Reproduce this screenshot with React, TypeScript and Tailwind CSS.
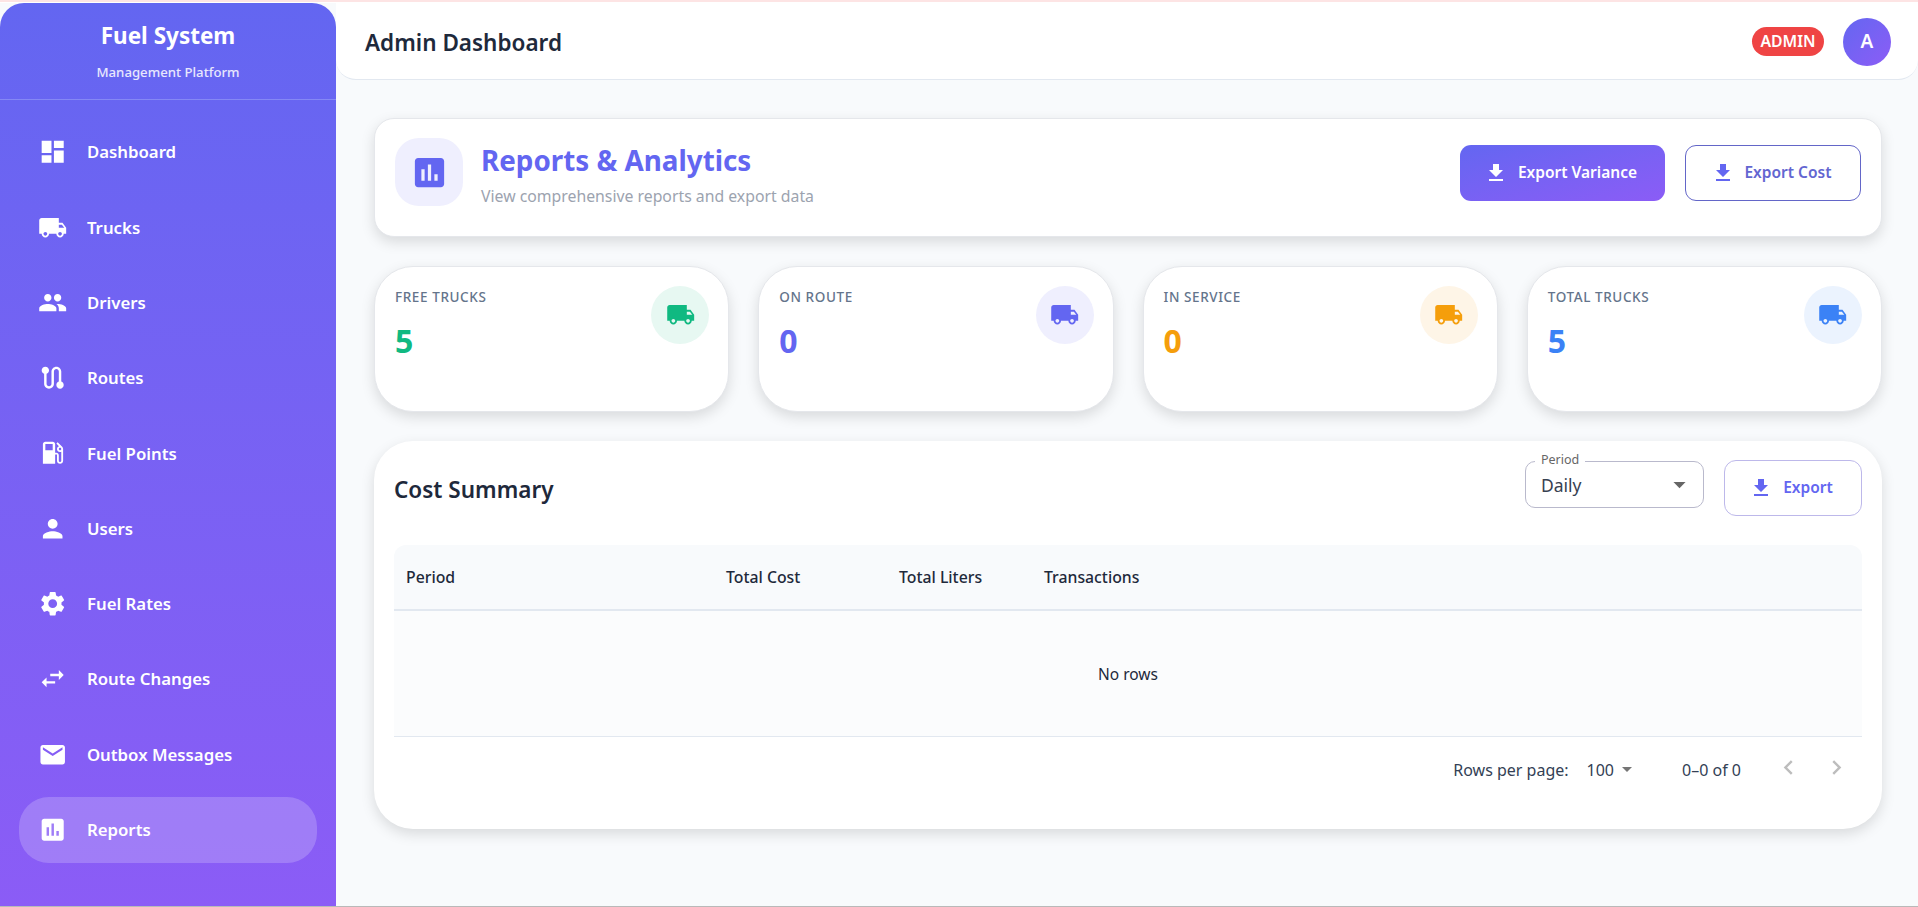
import React from "react";

const P = {
  dashboard: "M3 13h8V3H3v10zm0 8h8v-6H3v6zm10 0h8V11h-8v10zm0-18v6h8V3h-8z",
  truck: "M20 8h-3V4H3c-1.1 0-2 .9-2 2v11h2c0 1.66 1.34 3 3 3s3-1.34 3-3h6c0 1.66 1.34 3 3 3s3-1.34 3-3h2v-5l-3-4zM6 18.5c-.83 0-1.5-.67-1.5-1.5s.67-1.5 1.5-1.5 1.5.67 1.5 1.5-.67 1.5-1.5 1.5zm13.5-9 1.96 2.5H17V9.5h2.5zm-1.5 9c-.83 0-1.5-.67-1.5-1.5s.67-1.5 1.5-1.5 1.5.67 1.5 1.5-.67 1.5-1.5 1.5z",
  people: "M16 11c1.66 0 2.99-1.34 2.99-3S17.66 5 16 5c-1.66 0-3 1.34-3 3s1.34 3 3 3zm-8 0c1.66 0 2.99-1.34 2.99-3S9.66 5 8 5C6.34 5 5 6.34 5 8s1.34 3 3 3zm0 2c-2.33 0-7 1.17-7 3.5V19h14v-2.5c0-2.33-4.67-3.5-7-3.5zm8 0c-.29 0-.62.02-.97.05 1.16.84 1.97 1.97 1.97 3.45V19h6v-2.5c0-2.33-4.67-3.5-7-3.5z",
  route: "M19 15.18V7c0-2.21-1.79-4-4-4s-4 1.79-4 4v10c0 1.1-.9 2-2 2s-2-.9-2-2V8.82C8.16 8.4 9 7.3 9 6c0-1.66-1.34-3-3-3S3 4.34 3 6c0 1.3.84 2.4 2 2.82V17c0 2.21 1.79 4 4 4s4-1.79 4-4V7c0-1.1.9-2 2-2s2 .9 2 2v8.18c-1.16.41-2 1.51-2 2.82 0 1.66 1.34 3 3 3s3-1.34 3-3c0-1.3-.84-2.4-2-2.82z",
  gas: "m19.77 7.23.01-.01-3.72-3.72L15 4.56l2.11 2.11c-.94.36-1.61 1.26-1.61 2.33 0 1.38 1.12 2.5 2.5 2.5.36 0 .69-.08 1-.21v7.21c0 .55-.45 1-1 1s-1-.45-1-1V14c0-1.1-.9-2-2-2h-1V5c0-1.1-.9-2-2-2H6c-1.1 0-2 .9-2 2v16h10v-7.5h1.5v5c0 1.38 1.12 2.5 2.5 2.5s2.5-1.12 2.5-2.5V9c0-.69-.28-1.32-.73-1.77zM12 10H6V5h6v5zm6 0c-.55 0-1-.45-1-1s.45-1 1-1 1 .45 1 1-.45 1-1 1z",
  person: "M12 12c2.21 0 4-1.79 4-4s-1.79-4-4-4-4 1.79-4 4 1.79 4 4 4zm0 2c-2.67 0-8 1.34-8 4v2h16v-2c0-2.66-5.33-4-8-4z",
  settings: "M19.14 12.94c.04-.3.06-.61.06-.94 0-.32-.02-.64-.07-.94l2.03-1.58c.18-.14.23-.41.12-.61l-1.92-3.32c-.12-.22-.37-.29-.59-.22l-2.39.96c-.5-.38-1.03-.7-1.62-.94l-.36-2.54c-.04-.24-.24-.41-.48-.41h-3.84c-.24 0-.43.17-.47.41l-.36 2.54c-.59.24-1.13.57-1.62.94l-2.39-.96c-.22-.08-.47 0-.59.22L2.74 8.87c-.12.21-.08.47.12.61l2.03 1.58c-.05.3-.09.63-.09.94s.02.64.07.94l-2.03 1.58c-.18.14-.23.41-.12.61l1.92 3.32c.12.22.37.29.59.22l2.39-.96c.5.38 1.03.7 1.62.94l.36 2.54c.05.24.24.41.48.41h3.84c.24 0 .44-.17.47-.41l.36-2.54c.59-.24 1.13-.56 1.62-.94l2.39.96c.22.08.47 0 .59-.22l1.92-3.32c.12-.22.07-.47-.12-.61l-2.01-1.58zM12 15.6c-1.98 0-3.6-1.62-3.6-3.6s1.62-3.6 3.6-3.6 3.6 1.62 3.6 3.6-1.62 3.6-3.6 3.6z",
  swap: "M6.99 11 3 15l3.99 4v-3H14v-2H6.99v-3zM21 9l-3.99-4v3H10v2h7.01v3L21 9z",
  email: "M20 4H4c-1.1 0-1.99.9-1.99 2L2 18c0 1.1.9 2 2 2h16c1.1 0 2-.9 2-2V6c0-1.1-.9-2-2-2zm0 4-8 5-8-5V6l8 5 8-5v2z",
  report: "M19 3H5c-1.1 0-2 .9-2 2v14c0 1.1.9 2 2 2h14c1.1 0 2-.9 2-2V5c0-1.1-.9-2-2-2zM9 17H7v-7h2v7zm4 0h-2V7h2v10zm4 0h-2v-4h2v4z",
  download: "M5 20h14v-2H5v2zM19 9h-4V3H9v6H5l7 7 7-7z",
  drop: "M7 10l5 5 5-5z",
  left: "M15.41 16.59 10.83 12l4.58-4.59L14 6l-6 6 6 6 1.41-1.41z",
  right: "M8.59 16.59 13.17 12 8.59 7.41 10 6l6 6-6 6-1.41-1.41z",
};

function Icon({ d, className }: { d: string; className: string }) {
  return (
    <svg viewBox="0 0 24 24" fill="currentColor" className={className}>
      <path d={d} />
    </svg>
  );
}

const nav: [string, string][] = [
  ["Dashboard", P.dashboard],
  ["Trucks", P.truck],
  ["Drivers", P.people],
  ["Routes", P.route],
  ["Fuel Points", P.gas],
  ["Users", P.person],
  ["Fuel Rates", P.settings],
  ["Route Changes", P.swap],
  ["Outbox Messages", P.email],
  ["Reports", P.report],
];

const stats = [
  { label: "FREE TRUCKS", value: "5", text: "text-[#10b981]", bg: "bg-[#e7f8f2]" },
  { label: "ON ROUTE", value: "0", text: "text-[#6366f1]", bg: "bg-[#efeffe]" },
  { label: "IN SERVICE", value: "0", text: "text-[#f59e0b]", bg: "bg-[#fef5e7]" },
  { label: "TOTAL TRUCKS", value: "5", text: "text-[#3b82f6]", bg: "bg-[#ebf3fe]" },
];

export default function App() {
  return (
    <div className="flex h-[907px] w-[1918px] flex-col overflow-hidden bg-[#f8fafc] font-['Noto_Sans',sans-serif] text-[#1e293b]">
      <div className="h-[3px] shrink-0 border-t-2 border-[#fde4e4] bg-white" />
      <div className="flex min-h-0 flex-1">
        <aside className="flex w-[336px] shrink-0 flex-col rounded-t-[24px] bg-gradient-to-b from-[#6366f1] to-[#8b5cf6] text-white">
          <div className="flex h-[97px] shrink-0 flex-col items-center border-b border-[#8588f5] pt-[16px]">
            <div className="text-[22.5px] leading-[34px] font-bold">Fuel System</div>
            <div className="mt-[9px] text-[13.2px] leading-[20px] font-medium text-white/85">Management Platform</div>
          </div>
          <nav className="flex flex-col gap-[9.3px] px-[19px] pt-[19px]">
            {nav.map(([label, d]) => (
              <div
                key={label}
                className={`flex h-[66px] items-center rounded-[30px] pl-[18.5px] ${label === "Reports" ? "bg-white/20" : ""}`}
              >
                <Icon d={d} className="h-[29.4px] w-[29.4px] shrink-0" />
                <span className="ml-[20px] text-[16.8px] font-semibold">{label}</span>
              </div>
            ))}
          </nav>
        </aside>
        <main className="flex min-w-0 flex-1 flex-col">
          <header className="flex h-[77px] shrink-0 items-center justify-between rounded-b-[20px] border-b border-[#e2e8f0] bg-white pr-[27px] pl-[29px]">
            <h1 className="mt-[3px] text-[22.5px] font-semibold">Admin Dashboard</h1>
            <div className="mt-[1px] flex items-center gap-[19px]">
              <span className="flex h-[29px] w-[72px] items-center justify-center rounded-full bg-[#ef4444] text-[15.8px] font-semibold text-white">ADMIN</span>
              <div className="flex h-[48px] w-[48px] items-center justify-center rounded-full bg-gradient-to-br from-[#6366f1] to-[#8b5cf6] text-[19px] font-semibold text-white">A</div>
            </div>
          </header>
          <div className="flex flex-col pt-[38px] pr-[36px] pl-[38px]">
            <section className="flex h-[119px] items-start justify-between rounded-[20px] border border-[#e5e7eb] bg-white pt-[19px] pr-[20px] pl-[20px] shadow-[0_5px_14px_rgba(0,0,0,0.13)]">
              <div className="flex items-start">
                <div className="flex h-[68px] w-[68px] items-center justify-center rounded-[24px] bg-[#efeffe] text-[#6366f1]">
                  <Icon d={P.report} className="h-[39px] w-[39px]" />
                </div>
                <div className="ml-[18px]">
                  <h2 className="mt-[3px] text-[27.8px] leading-[38px] font-bold text-[#6366f1]">Reports &amp; Analytics</h2>
                  <p className="mt-[6px] text-[15.8px] leading-[22px] text-[#9ca3af]">View comprehensive reports and export data</p>
                </div>
              </div>
              <div className="mt-[7px] flex gap-[20px]">
                <button className="flex h-[56px] w-[205px] items-center justify-center gap-[10px] rounded-[11px] bg-gradient-to-br from-[#6366f1] to-[#8b5cf6] pr-[4px] text-[15.5px] font-semibold text-white">
                  <Icon d={P.download} className="h-[24px] w-[24px]" />
                  Export Variance
                </button>
                <button className="flex h-[56px] w-[176px] items-center justify-center gap-[9px] rounded-[11px] border border-[#6366c8] bg-white pr-[3px] text-[15.5px] font-semibold text-[#6366d1]">
                  <Icon d={P.download} className="h-[24px] w-[24px] text-[#6366f1]" />
                  Export Cost
                </button>
              </div>
            </section>

            <div className="mt-[29px] grid grid-cols-4 gap-[29px]">
              {stats.map((s) => (
                <div key={s.label} className="flex h-[146px] justify-between rounded-[39px] border border-[#e5e7eb] bg-white pt-[19px] pr-[19px] pl-[20px] shadow-[0_5px_14px_rgba(0,0,0,0.13)]">
                  <div>
                    <div className="mt-[1px] text-[13.5px] leading-[20px] font-medium tracking-[0.6px] text-[#64748b]">{s.label}</div>
                    <div className={`mt-[12px] text-[32px] leading-[44px] font-bold ${s.text}`}>{s.value}</div>
                  </div>
                  <div className={`flex h-[58px] w-[58px] items-center justify-center rounded-full ${s.bg} ${s.text}`}>
                    <Icon d={P.truck} className="h-[29.4px] w-[29.4px]" />
                  </div>
                </div>
              ))}
            </div>

            <section className="mt-[29px] flex h-[388px] flex-col rounded-[39px] bg-white px-[20px] pt-[19px] shadow-[0_5px_14px_rgba(0,0,0,0.13)]">
              <div className="flex h-[56px] shrink-0 items-center justify-between">
                <h3 className="mt-[4px] text-[22.5px] font-semibold">Cost Summary</h3>
                <div className="flex items-start gap-[20px]">
                  <div className="relative mt-[1px] flex h-[47px] w-[179px] items-center justify-between rounded-[10px] border border-[#b9b9cc] pr-[9px] pl-[15px] text-[#374151]">
                    <span className="absolute top-[-11px] left-[9px] bg-white px-[6px] text-[12.5px] leading-[18px] text-[#666]">Period</span>
                    <span className="mt-[1px] text-[17.5px]">Daily</span>
                    <Icon d={P.drop} className="h-[29px] w-[29px] text-[#666]" />
                  </div>
                  <button className="flex h-[56px] w-[138px] items-center justify-center gap-[10px] rounded-[12px] border border-[#bdb8ea] bg-white pr-[4px] text-[15.5px] font-semibold text-[#6366f1]">
                    <Icon d={P.download} className="h-[24px] w-[24px]" />
                    Export
                  </button>
                </div>
              </div>
              <div className="mt-[29px] grid h-[66px] shrink-0 grid-cols-[320px_173px_145px_1fr] items-center rounded-t-[12px] border-b-2 border-[#e2e8f0] bg-[#f8fafc] pt-[1px] text-[15.8px] font-medium">
                <div className="px-[12px]">Period</div>
                <div className="px-[12px]">Total Cost</div>
                <div className="px-[12px]">Total Liters</div>
                <div className="px-[12px]">Transactions</div>
              </div>
              <div className="flex h-[126px] shrink-0 items-center justify-center border-b border-[#e2e8f0] bg-[#fbfcfd] pt-[2px] text-[15.5px]">No rows</div>
              <div className="flex h-[66px] shrink-0 items-center justify-end text-[16px] text-[#334155]">
                <span>Rows per page:</span>
                <span className="ml-[18px]">100</span>
                <Icon d={P.drop} className="-mt-[2px] ml-[1px] h-[24px] w-[24px] text-[#757575]" />
                <span className="ml-[43px]">0–0 of 0</span>
                <Icon d={P.left} className="-mt-[5px] ml-[33px] h-[29px] w-[29px] text-[#bdbdbd]" />
                <Icon d={P.right} className="-mt-[5px] mr-[11px] ml-[19px] h-[29px] w-[29px] text-[#bdbdbd]" />
              </div>
            </section>
          </div>
        </main>
      </div>
      <div className="h-[1.5px] shrink-0 bg-[#b9b9b9]" />
    </div>
  );
}
